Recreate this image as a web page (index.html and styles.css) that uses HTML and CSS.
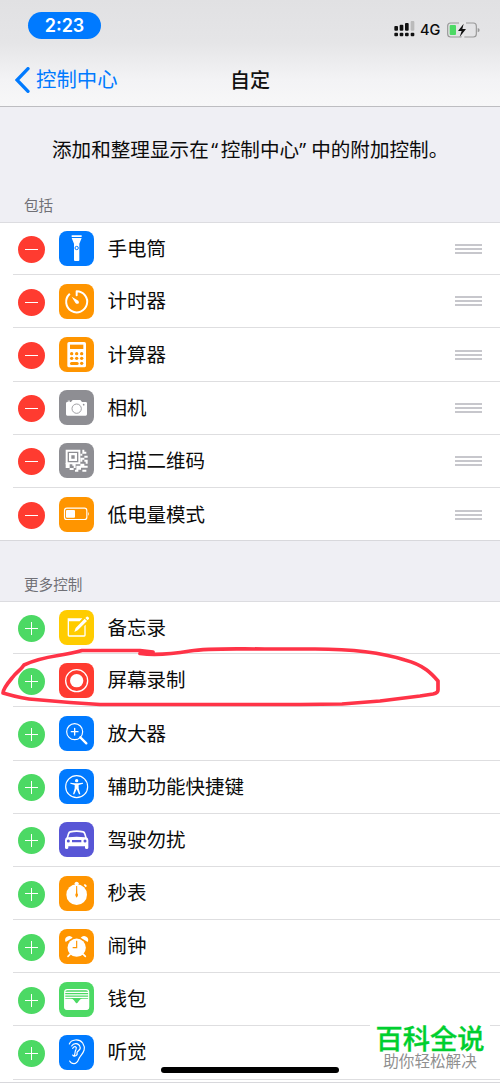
FILE: index.html
```html
<!DOCTYPE html>
<html lang="zh-CN">
<head>
<meta charset="utf-8">
<title>自定</title>
<link rel="stylesheet" href="styles.css">
</head>
<body>
<div class="screen">
  <header class="top">
    <div class="status">
      <span class="clock">2:23</span>
      <div class="indicators">
        <svg class="signal" viewBox="0 0 63 48">
          <g fill="#111"><rect x="1" y="15" width="11" height="14" rx="3"/><rect x="17" y="11" width="11" height="18" rx="3"/><rect x="33" y="6" width="11" height="23" rx="3"/><rect x="1" y="35" width="11" height="11" rx="3"/><rect x="17" y="35" width="11" height="11" rx="3"/><rect x="33" y="35" width="11" height="11" rx="3"/><rect x="50" y="35" width="11" height="11" rx="3"/></g>
          <rect x="50" y="0" width="11" height="29" rx="3" fill="#bbb"/>
        </svg>
        <span class="net">4G</span>
        <svg class="charge" viewBox="0 0 99 48">
          <rect x="2" y="3" width="86" height="42" rx="9" fill="none" stroke="#999" stroke-width="3.500"/>
          <path d="M36 0H57V8H50L37 26ZM33 48H43L52 28V48Z" fill="#e7e7e8"/>
          <rect x="8" y="9" width="19" height="30" rx="3" fill="#4cd964"/>
          <path d="M50 5L33 27H44L38 45L57 21H46Z" fill="#111"/>
          <path d="M92 18Q98 19 98 24T92 31Z" fill="#999"/>
        </svg>
      </div>
    </div>
    <nav class="nav">
      <div class="back"><svg class="chevron" viewBox="0 0 45 78"><path d="M39 5L6 39L39 73" fill="none" stroke="#007aff" stroke-width="10" stroke-linecap="round"/></svg><span>控制中心</span></div>
      <h1 class="title">自定</h1>
    </nav>
  </header>
  <p class="intro">添加和整理显示在<span class="quote open">“</span>控制中心<span class="quote">”</span>中的附加控制。</p>
  <h2 class="label first">包括</h2>
  <ul class="list">
    <li class="row"><i class="toggle minus"></i><svg class="icon blue" viewBox="0 0 105 105"><path d="M38 13H68V18H38ZM38 21H68L61 38V87Q61 90 58 90H48Q45 90 45 87V38Z"/><circle cx="53" cy="51" r="5" fill="#fff" stroke="#007aff" stroke-width="3"/></svg><span class="name">手电筒</span><i class="grip"></i></li>
    <li class="row"><i class="toggle minus"></i><svg class="icon orange" viewBox="0 0 105 105"><path class="line" d="M53 34V22A31.500 31.500 0 1 1 31 31" stroke-width="6"/><path d="M38 38L58 50Q62 55 58 59Q53 61 49 56Z"/></svg><span class="name">计时器</span><i class="grip"></i></li>
    <li class="row"><i class="toggle minus"></i><svg class="icon orange" viewBox="0 0 105 105"><rect x="25" y="15" width="56" height="76" rx="5"/><g fill="#ff9500"><rect x="33" y="23" width="40" height="13"/><circle cx="38" cy="50" r="5"/><circle cx="53" cy="50" r="5"/><circle cx="68" cy="50" r="5"/><circle cx="38" cy="64" r="5"/><circle cx="53" cy="64" r="5"/><circle cx="68" cy="64" r="5"/><rect x="33" y="75" width="26" height="9" rx="4.500"/><circle cx="68" cy="79" r="5"/></g></svg><span class="name">计算器</span><i class="grip"></i></li>
    <li class="row"><i class="toggle minus"></i><svg class="icon gray" viewBox="0 0 105 105"><path d="M25 36H36L41 30H64L69 36H80Q84 36 84 40V73Q84 77 80 77H25Q21 77 21 73V40Q21 36 25 36Z"/><rect x="26" y="32" width="7" height="3"/><circle cx="53" cy="56" r="14" fill="#fff" stroke="#8e8e93" stroke-width="2.500"/><circle cx="74" cy="44" r="2.500" fill="#8e8e93"/></svg><span class="name">相机</span><i class="grip"></i></li>
    <li class="row"><i class="toggle minus"></i><svg class="icon gray" viewBox="0 0 105 105"><path fill-rule="evenodd" d="M20 20H64V64H20ZM26 26V58H58V26ZM30 30H54V54H30ZM37 37V47H47V37Z"/><path d="M70 20H76V26H82V32H70ZM64 32H70V38H64ZM76 38H86V44H76ZM64 44H76V50H70V56H64ZM76 50H86V62H80V56H76ZM64 62H76V68H86V74H64ZM20 60H32V75H20ZM32 75H44V81H32ZM40 60H50V75H44V68H40ZM52 68H66V80H58V86H48V80H52ZM70 80H82V86H70Z"/></svg><span class="name">扫描二维码</span><i class="grip"></i></li>
    <li class="row"><i class="toggle minus"></i><svg class="icon orange" viewBox="0 0 105 105"><rect class="line" x="16.500" y="33.500" width="67" height="34" rx="7" stroke-width="3.500"/><rect x="21" y="39" width="27" height="23" rx="3"/><path d="M87 44Q92 50 87 57Z"/></svg><span class="name">低电量模式</span><i class="grip"></i></li>
  </ul>
  <h2 class="label second">更多控制</h2>
  <ul class="list more">
    <li class="row"><i class="toggle plus"></i><svg class="icon yellow" viewBox="0 0 105 105"><path d="M26 25H70L62 34H30V76H76V48L80 44V76Q80 80 76 80H30Q26 80 26 76Z"/><path d="M46 66L50 54L77 26L84 33L56 61ZM79 24L83 20Q85 18 88 21T90 26L86 31Z"/></svg><span class="name">备忘录</span></li>
    <li class="row"><i class="toggle plus"></i><svg class="icon red" viewBox="0 0 105 105"><circle class="line" cx="53" cy="53" r="33" stroke-width="4"/><circle cx="53" cy="53" r="20"/></svg><span class="name">屏幕录制</span></li>
    <li class="row"><i class="toggle plus"></i><svg class="icon blue" viewBox="0 0 105 105"><circle class="line" cx="47" cy="47" r="24" stroke-width="3.500"/><path class="line" d="M47 37V57M37 47H57" stroke-width="4"/><path class="line" d="M64 64L82 82" stroke-width="7"/></svg><span class="name">放大器</span></li>
    <li class="row"><i class="toggle plus"></i><svg class="icon blue" viewBox="0 0 105 105"><circle class="line" cx="53" cy="53" r="33" stroke-width="3.500"/><circle cx="53" cy="35" r="5"/><path d="M34 41L48 43H58L72 41V44L59 48V58L64 76H60L53 60L46 76H42L47 58V48L34 44Z"/></svg><span class="name">辅助功能快捷键</span></li>
    <li class="row"><i class="toggle plus"></i><svg class="icon purple" viewBox="0 0 105 105"><path fill-rule="evenodd" d="M33 27Q53 23 73 27Q78 28 80 35L83 46Q88 49 88 55V77Q88 81 83 81T78 77V73H28V77Q28 81 23 81T18 77V55Q18 49 23 46L26 35Q28 28 33 27ZM34 32Q31 33 28 46Q53 43 78 46Q75 33 72 32Q53 28 34 32ZM39 54V61H67V54Z"/><circle cx="28" cy="57" r="4.500" fill="#5856d6"/><circle cx="78" cy="57" r="4.500" fill="#5856d6"/></svg><span class="name">驾驶勿扰</span></li>
    <li class="row"><i class="toggle plus"></i><svg class="icon orange" viewBox="0 0 105 105"><circle cx="53" cy="56" r="31"/><path d="M46 23Q48 17 53 17T60 23L57 27H49ZM74 27L78 24L84 30L80 34Z"/><path d="M51.500 30H54.500L55 52Q60 57 53 65Q46 57 51 52Z" fill="#ff9500"/></svg><span class="name">秒表</span></li>
    <li class="row"><i class="toggle plus"></i><svg class="icon orange" viewBox="0 0 105 105"><circle cx="53" cy="56" r="27.500"/><path class="line" d="M33 76L27 82M73 76L79 82" stroke-width="5"/><path d="M20 39Q15 29 24 23Q34 18 41 26ZM86 39Q91 29 82 23Q72 18 65 26Z"/><path d="M53 35V56H41" fill="none" stroke="#ff9500" stroke-width="3.500"/></svg><span class="name">闹钟</span></li>
    <li class="row"><i class="toggle plus"></i><svg class="icon green" viewBox="0 0 105 105"><rect class="line" x="17" y="23" width="72" height="59" rx="8" stroke-width="3.500"/><path class="line" d="M18 31H88M18 38.500H88M18 46H88" stroke-width="4"/><path d="M16 50H36Q41 50 44 54L51 63Q53 65 55 63L62 54Q65 50 70 50H90V76Q90 83 83 83H23Q16 83 16 76Z"/></svg><span class="name">钱包</span></li>
    <li class="row"><i class="toggle plus"></i><svg class="icon blue" viewBox="0 0 105 105"><path class="line" d="M31 27C36 13 60 10 71 24C83 43 71 54 64 64C57 72 58 86 45 86Q36 86 32 78M38 33C44 22 59 24 63 35C68 45 54 47 54 53C57 61 45 68 41 60M41 40C48 30 54 37 51 43C46 51 50 56 45 63" stroke-width="3.500"/></svg><span class="name">听觉</span></li>
  </ul>
  <svg class="marker" viewBox="0 0 500 80"><path d="M140 12.500C152 14 172 13 190 10C210 7 230 8 265 8H315C350 8 380 11 405 19C424 24 432 33 438 40V49Q438 52 433 53L420 55L380 60L342 63L300 63.500H100L70 61.500L35 58.500C23 58 10 54 3 52C3 48 7 43 12 37C17 30 20 30 24 24C45 14 60 16 82 9.500H140L153 11" fill="none" stroke="#ff3347" stroke-width="3.700" stroke-linecap="round" stroke-linejoin="round"/></svg>
  <div class="home"></div>
  <div class="brand"><strong>百科全说</strong><span>助你轻松解决</span></div>
</div>
</body>
</html>
```
FILE: styles.css
```css
* { box-sizing: border-box; }
body { margin: 0; background: #fff; color: #0b0b0b; font-family: "Liberation Sans", "Noto Sans CJK SC", sans-serif; }
.screen { position: relative; height: 1083px; overflow: hidden; background: #efeff4; }
.top { height: 107px; background: linear-gradient(#e1e1e3, #e5e5e7 40%, #f3f3f5 75%, #f7f7f8); border-bottom: 1px solid #bdbdc1; }
.status { display: flex; justify-content: space-between; padding: 12px 20px 0 28px; height: 53px; }
.clock { width: 73px; height: 27px; border-radius: 14px; background: #007aff; color: #fff; font: 600 18px/27px Inter, sans-serif; text-align: center; }
.indicators { display: flex; align-items: flex-start; padding-top: 9px; }
.signal { width: 21px; height: 16px; }
.net { font: 500 14.500px/18px Inter, sans-serif; margin: 0 0 0 5px; width: 22px; }
.charge { width: 33px; height: 16px; margin: 1px 0 0 5px; }
.nav { display: grid; grid-template-columns: 1fr auto 1fr; align-items: center; height: 53px; padding: 0 15px; }
.back { display: flex; align-items: center; color: #007aff; font-size: 20.400px; line-height: 30px; }
.chevron { width: 15px; height: 26px; margin-right: 6px; }
.title { margin: 0; font-size: 20px; line-height: 30px; font-weight: 500; font-family: "Noto Sans CJK SC", sans-serif; color: #111; }
.intro { margin: 0; padding: 28px 0 0 52px; height: 86px; font: 19.600px/28px "Noto Sans CJK SC", sans-serif; white-space: nowrap; }
.quote { display: inline-block; width: 12px; font-family: "Open Sans", sans-serif; line-height: 20px; }
.open { text-align: center; }
.label { margin: 0; padding-left: 24px; color: #707076; font-weight: 400; font-size: 14.600px; line-height: 20px; }
.first { height: 29px; padding-top: 3px; }
.second { height: 60px; padding-top: 34px; }
.list { margin: 0; padding: 0; list-style: none; background: #fff; border-top: 1px solid #dcdce0; border-bottom: 1px solid #d8d8dc; height: 319px; }
.more { height: 482px; }
.row { display: flex; align-items: center; height: 53.170px; margin-left: 13px; padding-left: 5px; border-bottom: 1px solid #dedee0; }
.row:first-child { height: 52.300px; }
.row:last-child { border-bottom: 0; }
.more .row:last-child { border-bottom: 1px solid #dedee0; }
.toggle { flex: none; width: 27px; height: 27px; margin-top: 2px; border-radius: 50%; background-position: center; background-repeat: no-repeat; }
.minus { background-color: #ff3b30; background-image: linear-gradient(#fff, #fff); background-size: 13px 1.300px; }
.plus { background-color: #4cd964; background-image: linear-gradient(#fff, #fff), linear-gradient(#fff, #fff); background-size: 13px 1.300px, 1.300px 13px; }
.icon { flex: none; width: 35px; height: 35px; margin-left: 14px; border-radius: 8px; fill: #fff; }
.line { fill: none; stroke: #fff; stroke-linecap: round; stroke-linejoin: round; }
.blue { background: #007aff; }
.orange { background: #ff9500; }
.gray { background: #8e8e93; }
.yellow { background: #ffcc00; }
.red { background: #ff3b30; }
.purple { background: #5856d6; }
.green { background: #4cd964; }
.name { flex: 1; margin-left: 13.500px; font-size: 19.500px; line-height: 30px; }
.grip { width: 27px; height: 10px; margin-right: 18px; background: repeating-linear-gradient(#c7c7cc 0 2px, #fff 2px 4px); }
.marker { position: absolute; left: 0; top: 641px; width: 500px; height: 80px; }
.home { position: absolute; left: 161px; top: 1067px; width: 178px; height: 6px; border-radius: 3px; background: #000; }
.brand { position: absolute; left: 370px; top: 1022px; width: 120px; height: 52px; background: #fff; display: flex; flex-direction: column; align-items: center; white-space: nowrap; }
.brand strong { color: #00cf2f; font: 500 27.300px/31px "Noto Sans CJK SC", sans-serif; -webkit-text-stroke: 0.300px #00cf2f; }
.brand span { color: #8f8f8f; font-size: 15.600px; line-height: 18px; }
```
